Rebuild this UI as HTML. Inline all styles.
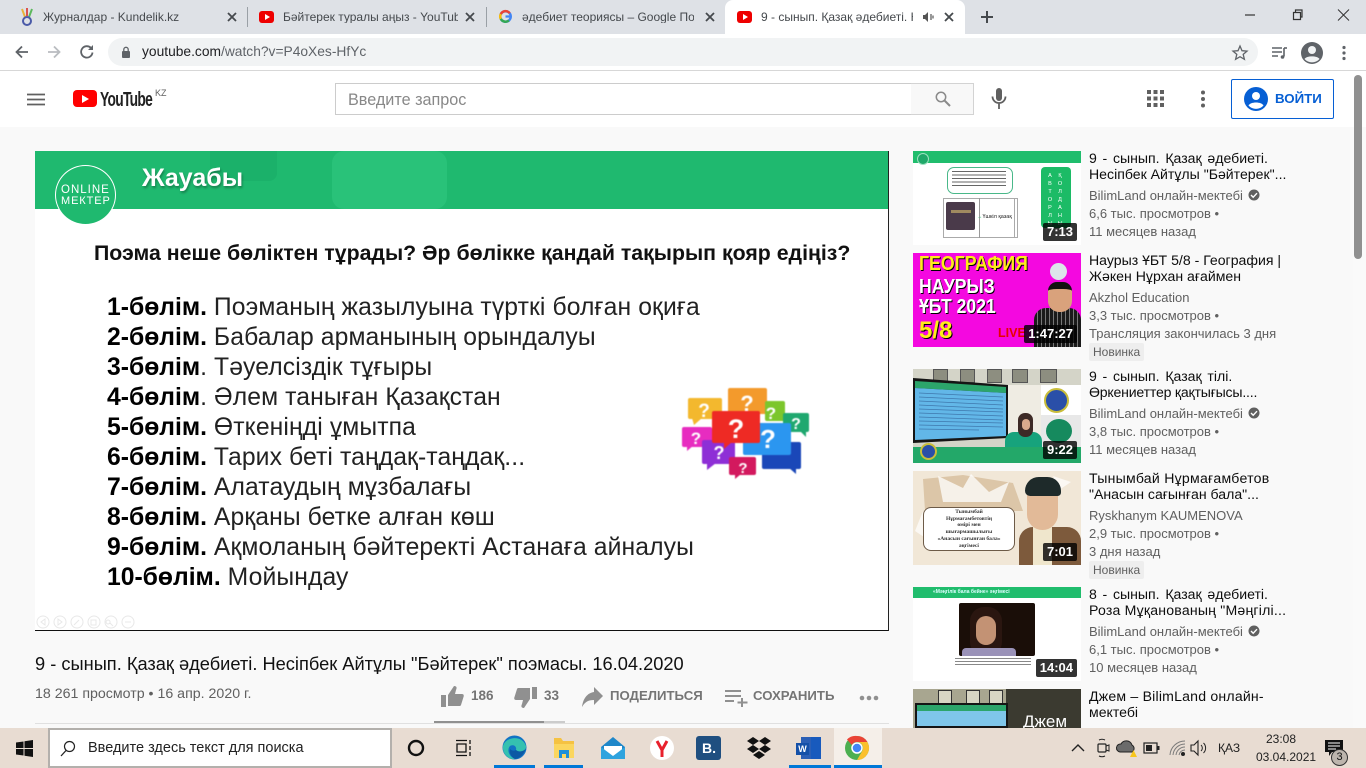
<!DOCTYPE html>
<html><head><meta charset="utf-8"><style>
html,body{margin:0;padding:0;width:1366px;height:768px;overflow:hidden;background:#f9f9f9;font-family:"Liberation Sans","Noto Sans CJK SC",sans-serif}
.a,.t{position:absolute}
.t{white-space:nowrap;line-height:1}
svg{position:absolute;overflow:visible}
.ti{font-size:14.100px;color:#0d0d0d}
.m{font-size:13px;color:#606060}
.d{background:rgba(0,0,0,.8);color:#fff;font-weight:bold;font-size:13px;line-height:18px;height:18px;padding:0 4px;border-radius:2px;position:absolute;white-space:nowrap;right:289px}
.nv{background:#eee;color:#606060;font-size:12px;position:absolute;height:18px;line-height:18px;padding:0 4px;border-radius:2px;left:1089px}
.b{font-size:24.700px;color:#222;letter-spacing:.11px}
.b b{color:#000;letter-spacing:0}
.tab{font-size:12px;color:#45494d}
</style></head><body>

<!-- tab strip -->
<div class="a" style="left:0;top:0;width:1366px;height:34px;background:#dee1e6"></div>
<svg style="left:17px;top:7px" width="20" height="20" viewBox="0 0 20 20"><path d="M5 2l3 8" stroke="#e8b33a" stroke-width="2" fill="none"/><path d="M10 1v8" stroke="#d9534f" stroke-width="2"/><path d="M15 2l-3 8" stroke="#5cb85c" stroke-width="2"/><circle cx="10" cy="14" r="4" fill="none" stroke="#4a5aa8" stroke-width="2"/></svg>
<div class="t tab" style="left:43px;top:11px;">Журналдар - Kundelik.kz</div>
<svg style="left:227px;top:12px" width="10" height="10" viewBox="0 0 10 10"><path d="M1 1l8 8M9 1L1 9" stroke="#45494d" stroke-width="1.800"/></svg>
<div class="a" style="left:247px;top:7px;width:1px;height:20px;background:#9aa0a6"></div>
<div class="a" style="left:486px;top:7px;width:1px;height:20px;background:#9aa0a6"></div>
<div class="a" style="left:259px;top:11px;width:15px;height:12px;background:#e00;border-radius:3px"></div>
<div class="a" style="left:265px;top:14px;border-left:5px solid #fff;border-top:3px solid transparent;border-bottom:3px solid transparent"></div>
<div class="t tab" style="left:283px;top:11px;width:175px;overflow:hidden">Бәйтерек туралы аңыз - YouTube</div>
<svg style="left:465px;top:12px" width="10" height="10" viewBox="0 0 10 10"><path d="M1 1l8 8M9 1L1 9" stroke="#45494d" stroke-width="1.800"/></svg>
<svg style="left:498px;top:9px" width="15" height="15" viewBox="0 0 16 16"><circle cx="8" cy="8" r="5.600" fill="none" stroke="#4285f4" stroke-width="2.600"/><path d="M12.500 4.500A5.600 5.600 0 0 0 3 5.400" stroke="#ea4335" stroke-width="2.600" fill="none"/><path d="M3 5.400a5.600 5.600 0 0 0 0 5.200" stroke="#fbbc05" stroke-width="2.600" fill="none"/><path d="M3 10.600a5.600 5.600 0 0 0 8.600 1.600" stroke="#34a853" stroke-width="2.600" fill="none"/><path d="M8 8h5.600" stroke="#4285f4" stroke-width="2.400"/></svg>
<div class="t tab" style="left:522px;top:11px;width:172px;overflow:hidden">әдебиет теориясы – Google Поиск</div>
<svg style="left:705px;top:12px" width="10" height="10" viewBox="0 0 10 10"><path d="M1 1l8 8M9 1L1 9" stroke="#45494d" stroke-width="1.800"/></svg>
<div class="a" style="left:725px;top:0;width:240px;height:34px;background:#fff;border-radius:8px 8px 0 0"></div>
<div class="a" style="left:737px;top:11px;width:15px;height:12px;background:#e00;border-radius:3px"></div>
<div class="a" style="left:743px;top:14px;border-left:5px solid #fff;border-top:3px solid transparent;border-bottom:3px solid transparent"></div>
<div class="t tab" style="left:761px;top:11px;width:152px;overflow:hidden">9 - сынып. Қазақ әдебиеті. Несіпбек</div>
<svg style="left:922px;top:11px" width="14" height="12" viewBox="0 0 14 12"><path d="M1 4h2l3-3v10L3 8H1z" fill="#555"/><path d="M9 3v6M11 4.500v3" stroke="#555" stroke-width="1.200"/></svg>
<svg style="left:944px;top:12px" width="10" height="10" viewBox="0 0 10 10"><path d="M1 1l8 8M9 1L1 9" stroke="#45494d" stroke-width="1.800"/></svg>
<svg style="left:980px;top:10px" width="14" height="14" viewBox="0 0 14 14"><path d="M7 1v12M1 7h12" stroke="#45494d" stroke-width="2"/></svg>
<svg style="left:1240px;top:6px" width="115" height="18" viewBox="0 0 115 18"><path d="M5 9h10" stroke="#333" stroke-width="1.200"/><path d="M53.500 6.500h7v7h-7zM55.500 6.500v-2.500h6.500v7h-1.500" fill="none" stroke="#333" stroke-width="1.200"/><path d="M98 3.500l11 11M109 3.500l-11 11" stroke="#333" stroke-width="1"/></svg>

<!-- toolbar -->
<div class="a" style="left:0;top:34px;width:1366px;height:36px;background:#fff"></div>
<div class="a" style="left:0;top:70px;width:1366px;height:1px;background:#d7d7d7"></div>
<svg style="left:14px;top:44px" width="16" height="16" viewBox="0 0 16 16"><path d="M14 8H3M8 2.500L2.500 8 8 13.500" fill="none" stroke="#5f6368" stroke-width="1.800"/></svg>
<svg style="left:46px;top:44px" width="16" height="16" viewBox="0 0 16 16"><path d="M2 8h11M8 2.500L13.500 8 8 13.500" fill="none" stroke="#b9bcc0" stroke-width="1.800"/></svg>
<svg style="left:78px;top:43px" width="18" height="18" viewBox="0 0 18 18"><path d="M14.500 9.500A5.700 5.700 0 1 1 13 5" fill="none" stroke="#5f6368" stroke-width="1.800"/><path d="M15 2v5h-5z" fill="#5f6368"/></svg>
<div class="a" style="left:108px;top:38px;width:1150px;height:28px;background:#f1f3f4;border-radius:14px"></div>
<svg style="left:121px;top:46px" width="10" height="13" viewBox="0 0 10 13"><rect x="1" y="5" width="8" height="7" rx="1" fill="#5f6368"/><path d="M2.800 5V3.500a2.200 2.200 0 0 1 4.400 0V5" fill="none" stroke="#5f6368" stroke-width="1.300"/></svg>
<div class="t" style="left:142px;top:45px;font-size:13.800px;color:#202124;">youtube.com<span style="color:#5f6368">/watch?v=P4oXes-HfYc</span></div>
<svg style="left:1232px;top:45px" width="16" height="15" viewBox="0 0 16 15"><path d="M8 1l2 4.700 5 .4-3.800 3.300 1.200 4.900L8 11.700l-4.400 2.600 1.200-4.900L1 6.100l5-.4z" fill="none" stroke="#5f6368" stroke-width="1.300"/></svg>
<svg style="left:1271px;top:46px" width="17" height="14" viewBox="0 0 17 14"><path d="M1 2h10M1 6h10M1 10h6" stroke="#5f6368" stroke-width="1.400"/><path d="M13 2v8.500" stroke="#5f6368" stroke-width="1.600"/><circle cx="11.500" cy="11" r="1.800" fill="#5f6368"/><path d="M13 2h3" stroke="#5f6368" stroke-width="1.600"/></svg>
<svg style="left:1300px;top:41px" width="24" height="24" viewBox="0 0 24 24"><circle cx="12" cy="12" r="11" fill="#5f6368"/><circle cx="12" cy="9" r="4" fill="#f1f3f4"/><path d="M4.500 18c2-3.500 13-3.500 15 0a10 10 0 0 1-15 0z" fill="#f1f3f4"/></svg>
<svg style="left:1341px;top:45px" width="6" height="16" viewBox="0 0 6 16"><circle cx="3" cy="2.500" r="1.600" fill="#5f6368"/><circle cx="3" cy="8" r="1.600" fill="#5f6368"/><circle cx="3" cy="13.500" r="1.600" fill="#5f6368"/></svg>

<!-- scrollbar track -->
<div class="a" style="left:1353px;top:127px;width:13px;height:601px;background:#fafafa"></div>

<!-- yt header -->
<div class="a" style="left:0;top:71px;width:1366px;height:56px;background:#fff"></div>
<div class="a" style="left:1354px;top:75px;width:8px;height:184px;background:#909090;border-radius:4px"></div>
<svg style="left:27px;top:93px" width="18" height="13" viewBox="0 0 18 13"><path d="M0 1.500h18M0 6.500h18M0 11.500h18" stroke="#606060" stroke-width="1.700"/></svg>
<div class="a" style="left:73px;top:90px;width:24px;height:17px;background:#f00;border-radius:4px"></div>
<div class="a" style="left:82px;top:94.500px;border-left:7px solid #fff;border-top:4px solid transparent;border-bottom:4px solid transparent"></div>
<div class="t" style="left:100px;top:90px;font-size:20px;color:#212121;font-weight:bold;letter-spacing:-1px;transform:scaleX(.69);transform-origin:0 0">YouTube</div>
<div class="t" style="left:155px;top:89px;font-size:9px;color:#606060">KZ</div>
<div class="a" style="left:335px;top:83px;width:575px;height:30px;background:#fff;border:1px solid #ccc"></div>
<div class="t" style="left:348px;top:92px;font-size:16.200px;color:#888;">Введите запрос</div>
<div class="a" style="left:911px;top:83px;width:62px;height:30px;background:#f8f8f8;border:1px solid #d3d3d3;border-left:0"></div>
<svg style="left:935px;top:91px" width="16" height="16" viewBox="0 0 16 16"><circle cx="6" cy="6" r="4.700" fill="none" stroke="#8a8a8a" stroke-width="1.500"/><path d="M9.500 9.500L15 15" stroke="#8a8a8a" stroke-width="2"/></svg>
<svg style="left:990px;top:88px" width="18" height="21" viewBox="0 0 18 21"><rect x="6" y="0" width="6" height="13" rx="3" fill="#606060"/><path d="M2.500 8.500a6.500 6.500 0 0 0 13 0M9 15v6" fill="none" stroke="#606060" stroke-width="1.800"/></svg>
<svg style="left:1147px;top:90px" width="17" height="17" viewBox="0 0 17 17" fill="#606060"><rect width="4" height="4"/><rect x="6.500" width="4" height="4"/><rect x="13" width="4" height="4"/><rect y="6.500" width="4" height="4"/><rect x="6.500" y="6.500" width="4" height="4"/><rect x="13" y="6.500" width="4" height="4"/><rect y="13" width="4" height="4"/><rect x="6.500" y="13" width="4" height="4"/><rect x="13" y="13" width="4" height="4"/></svg>
<svg style="left:1200px;top:90px" width="6" height="18" viewBox="0 0 6 18"><circle cx="3" cy="2.500" r="2" fill="#606060"/><circle cx="3" cy="9" r="2" fill="#606060"/><circle cx="3" cy="15.500" r="2" fill="#606060"/></svg>
<div class="a" style="left:1231px;top:79px;width:101px;height:38px;border:1px solid #065fd4;border-radius:2px;background:#fff"></div>
<svg style="left:1244px;top:87px" width="24" height="24" viewBox="0 0 24 24"><circle cx="12" cy="12" r="12" fill="#065fd4"/><circle cx="12" cy="9" r="4" fill="#fff"/><path d="M4.500 18.500c2-4 13-4 15 0a10 10 0 0 1-15 0z" fill="#fff"/></svg>
<div class="t" style="left:1275px;top:92px;font-size:13.300px;color:#065fd4;font-weight:bold;">ВОЙТИ</div>

<!-- video -->
<div class="a" style="left:35px;top:151px;width:854px;height:480px;background:#fff"></div>
<div class="a" style="left:35px;top:630px;width:854px;height:1px;background:#111"></div>
<div class="a" style="left:888px;top:151px;width:1px;height:480px;background:#222"></div>
<div class="a" style="left:35px;top:151px;width:853px;height:58px;background:#1fb96f"></div>
<div class="a" style="left:332px;top:151px;width:115px;height:58px;background:#2cc47c;border-radius:12px;opacity:.8"></div>
<div class="a" style="left:210px;top:151px;width:67px;height:30px;background:#17a964;opacity:.45;border-radius:0 0 8px 8px"></div>
<div class="a" style="left:55px;top:165px;width:61px;height:60px;box-sizing:border-box;background:#1fb96f;border:1px solid #fff;border-radius:50%;"></div>
<div class="t" style="left:61px;top:185px;font-size:11.500px;color:#fff;letter-spacing:1px">ONLINE</div>
<div class="t" style="left:61px;top:196px;font-size:11px;color:#fff;letter-spacing:.9px">МЕКТЕР</div>
<div class="t" style="left:142px;top:166px;font-size:25px;font-weight:bold;color:#fff;text-shadow:1px 2px 2px rgba(0,0,0,.3)">Жауабы</div>
<div class="t" style="left:94px;top:243px;font-size:21.300px;font-weight:bold;color:#111;">Поэма неше бөліктен тұрады? Әр бөлікке қандай тақырып қояр едіңіз?</div>
<div class="t b" style="left:107px;top:296px"><b>1-бөлім.</b> Поэманың жазылуына түрткі болған оқиға</div>
<div class="t b" style="left:107px;top:326px"><b>2-бөлім.</b> Бабалар арманының орындалуы</div>
<div class="t b" style="left:107px;top:356px"><b>3-бөлім</b>. Тәуелсіздік тұғыры</div>
<div class="t b" style="left:107px;top:386px"><b>4-бөлім</b>. Әлем таныған Қазақстан</div>
<div class="t b" style="left:107px;top:416px"><b>5-бөлім.</b> Өткеніңді ұмытпа</div>
<div class="t b" style="left:107px;top:446px"><b>6-бөлім.</b> Тарих беті таңдақ-таңдақ...</div>
<div class="t b" style="left:107px;top:476px"><b>7-бөлім.</b> Алатаудың мұзбалағы</div>
<div class="t b" style="left:107px;top:506px"><b>8-бөлім.</b> Арқаны бетке алған көш</div>
<div class="t b" style="left:107px;top:536px"><b>9-бөлім.</b> Ақмоланың бәйтеректі Астанаға айналуы</div>
<div class="t b" style="left:107px;top:566px"><b>10-бөлім.</b> Мойындау</div>

<!-- question bubbles -->
<svg style="left:660px;top:375px;filter:blur(.5px)" width="170" height="120" viewBox="0 0 170 120" font-family="Liberation Sans" font-weight="bold" fill="#fff" text-anchor="middle">
<rect x="28" y="23" width="34" height="21" rx="2" fill="#f3b82e"/><path d="M32 43l2 7 8-7z" fill="#f3b82e"/><text x="44" y="42" font-size="19">?</text>
<rect x="68" y="13" width="39" height="26" rx="2" fill="#f39a2c"/><text x="87" y="36" font-size="22">?</text>
<rect x="105" y="26" width="20" height="20" rx="2" fill="#7cc62c"/><text x="111" y="44" font-size="17">?</text>
<rect x="123" y="38" width="26" height="19" rx="2" fill="#1fa86f"/><path d="M140 56l6 6v-6z" fill="#1fa86f"/><text x="136" y="54" font-size="16">?</text>
<rect x="22" y="52" width="30" height="20" rx="2" fill="#e72cc0"/><path d="M27 70v6l7-6z" fill="#e72cc0"/><text x="36" y="69" font-size="17">?</text>
<rect x="42" y="65" width="33" height="24" rx="2" fill="#8e2fd6"/><path d="M47 88v7l9-7z" fill="#8e2fd6"/><text x="59" y="84" font-size="18">?</text>
<rect x="69" y="82" width="27" height="18" rx="2" fill="#d3195e"/><path d="M75 99v5l6-5z" fill="#d3195e"/><text x="83" y="98" font-size="15">?</text>
<rect x="102" y="67" width="39" height="27" rx="2" fill="#1a47b8"/><path d="M128 92l8 7v-7z" fill="#1a47b8"/>
<rect x="83" y="48" width="48" height="32" rx="2" fill="#2b96f0"/><text x="108" y="73" font-size="26">?</text>
<rect x="52" y="36" width="48" height="32" rx="2" fill="#ee2a24"/><path d="M64 66v8l9-8z" fill="#ee2a24"/><text x="76" y="63" font-size="27">?</text>
</svg>

<!-- player controls ghost -->
<svg style="left:36px;top:614px" width="100" height="16" viewBox="0 0 100 16" fill="none" stroke="#e8e8e8" stroke-width="1"><circle cx="7" cy="8" r="6"/><circle cx="24" cy="8" r="6"/><circle cx="41" cy="8" r="6"/><circle cx="58" cy="8" r="6"/><circle cx="75" cy="8" r="6"/><circle cx="92" cy="8" r="6"/><path d="M9 5L5 8l4 3zM22 5l4 3-4 3zM38 11l5-5M55 6h5v5h-5zM72 6a2 2 0 1 0 .1 0zM74 9l3 3M89 8h6"/></svg>

<!-- title -->
<div class="t" style="left:35px;top:655px;font-size:18.250px;color:#111;">9 - сынып. Қазақ әдебиеті. Несіпбек Айтұлы "Бәйтерек" поэмасы. 16.04.2020</div>
<div class="t" style="left:35px;top:687px;font-size:14.200px;color:#606060;">18 261 просмотр • 16 апр. 2020 г.</div>
<svg style="left:440px;top:685px" width="24" height="23" viewBox="0 0 24 23"><path d="M1 10h5v12H1zM8 21V10l6-9c3 0 3 2 2 4l-1 4h7c2 0 2 2 1.500 3l-2.500 8c-.5 1-1 1-2 1z" fill="#909090"/></svg>
<div class="t" style="left:471px;top:689px;font-size:13.500px;font-weight:bold;color:#757575;">186</div>
<svg style="left:514px;top:686px" width="24" height="23" viewBox="0 0 24 23"><path d="M18 1h5v12h-5zM16 2v11l-6 9c-3 0-3-2-2-4l1-4H2c-2 0-2-2-1.500-3L3 3c.5-1 1-1 2-1z" fill="#909090"/></svg>
<div class="t" style="left:544px;top:689px;font-size:13.500px;font-weight:bold;color:#757575;">33</div>
<svg style="left:582px;top:687px" width="21" height="20" viewBox="0 0 21 20"><path d="M12 0l9 9-9 9v-5C6 13 3 15 0 20 1 12 5 6 12 5z" fill="#909090"/></svg>
<div class="t" style="left:610px;top:689px;font-size:13.200px;font-weight:bold;color:#757575;">ПОДЕЛИТЬСЯ</div>
<svg style="left:725px;top:689px" width="23" height="18" viewBox="0 0 23 18"><path d="M0 2h16M0 7h16M0 12h9M17 9v9M12.500 13.500h10" stroke="#909090" stroke-width="2"/></svg>
<div class="t" style="left:753px;top:689px;font-size:13.200px;font-weight:bold;color:#757575;">СОХРАНИТЬ</div>
<svg style="left:859px;top:695px" width="20" height="6" viewBox="0 0 20 6"><circle cx="3" cy="3" r="2.300" fill="#909090"/><circle cx="10" cy="3" r="2.300" fill="#909090"/><circle cx="17" cy="3" r="2.300" fill="#909090"/></svg>
<div class="a" style="left:35px;top:723px;width:854px;height:1px;background:#e0e0e0"></div>
<div class="a" style="left:434px;top:721px;width:131px;height:2px;background:#ccc"></div>
<div class="a" style="left:434px;top:721px;width:110px;height:2px;background:#909090"></div>

<!-- sidebar thumbs -->
<div class="a" style="left:913px;top:151px;width:168px;height:94px;background:#fff;overflow:hidden">
 <div class="a" style="left:0;top:0;width:168px;height:12px;background:#20bd6d"></div>
 <div class="a" style="left:4px;top:2px;width:12px;height:12px;border-radius:50%;background:#1fa869;border:1px solid #9fe0c0;box-sizing:border-box"></div>
 <div class="a" style="left:34px;top:16px;width:66px;height:27px;box-sizing:border-box;background:#fff;border:1px solid #49b889;border-radius:7px"></div>
 <div class="a" style="left:39px;top:20px;width:54px;height:15px;background:repeating-linear-gradient(#666 0 1px,#fff 1px 3.500px)"></div>
 <div class="a" style="left:30px;top:47px;width:75px;height:40px;box-sizing:border-box;border:1px solid #aaa;background:#fff"></div>
 <div class="a" style="left:66px;top:47px;width:1px;height:40px;background:#999"></div>
 <div class="a" style="left:101px;top:47px;width:1px;height:40px;background:#aaa"></div>
 <div class="a" style="left:33px;top:51px;width:29px;height:28px;background:#4a3a4a;border-radius:2px"></div>
 <div class="a" style="left:38px;top:59px;width:20px;height:3px;background:#a08a60"></div>
 <div class="t" style="left:64px;top:64px;font-size:5.500px;color:#222"><span style="color:#1cbb66">→</span>Үшкіл қазақ</div>
 <div class="a" style="left:128px;top:16px;width:30px;height:61px;background:#1cbb66;border-radius:4px"></div>
 <div class="a" style="left:134px;top:21px;width:6px;font-size:5.500px;line-height:8px;color:#fff;text-align:center">А В Т О Р Л Ы</div>
 <div class="a" style="left:144px;top:21px;width:6px;font-size:5.500px;line-height:8px;color:#fff;text-align:center">Қ О Л Д А Н Ы</div>
</div>
<div class="d" style="top:223px">7:13</div>

<div class="a" style="left:913px;top:253px;width:168px;height:94px;background:#f408e0;overflow:hidden">
 <div class="t" style="left:6px;top:1px;font-size:20px;font-weight:bold;color:#ffeb1a;text-shadow:1px 1px 0 #000;transform:scaleX(.886);transform-origin:0 0">ГЕОГРАФИЯ</div>
 <div class="t" style="left:6px;top:24px;font-size:20px;font-weight:bold;color:#fff;text-shadow:1px 1px 0 #000;transform:scaleX(.88);transform-origin:0 0">НАУРЫЗ</div>
 <div class="t" style="left:6px;top:44px;font-size:20px;font-weight:bold;color:#fff;text-shadow:1px 1px 0 #000;transform:scaleX(.88);transform-origin:0 0">ҰБТ 2021</div>
 <div class="t" style="left:6px;top:66px;font-size:24px;font-weight:bold;color:#ffeb1a;text-shadow:1px 1px 0 #000">5/8</div>
 <div class="t" style="left:85px;top:74px;font-size:12.500px;font-weight:bold;color:#e80000">LIVE</div>
 <div class="a" style="left:137px;top:10px;width:17px;height:17px;border-radius:50%;background:#dde4ea"></div>
 <div class="a" style="left:121px;top:55px;width:47px;height:39px;background:repeating-linear-gradient(90deg,#1a1a1a 0 3px,#777 3px 4px);border-radius:12px 12px 0 0"></div>
 <div class="a" style="left:135px;top:29px;width:24px;height:30px;background:#d9a27c;border-radius:9px 9px 11px 11px;border-top:7px solid #111;box-sizing:border-box"></div>
</div>
<div class="d" style="top:325px">1:47:27</div>

<div class="a" style="left:913px;top:369px;width:168px;height:94px;background:#d4d4c8;overflow:hidden">
 <div class="a" style="left:20px;top:0;width:15px;height:14px;background:#8d8e80;border:1px solid #555;box-sizing:border-box"></div>
 <div class="a" style="left:47px;top:0;width:15px;height:14px;background:#8d8e80;border:1px solid #555;box-sizing:border-box"></div>
 <div class="a" style="left:74px;top:0;width:15px;height:14px;background:#8d8e80;border:1px solid #555;box-sizing:border-box"></div>
 <div class="a" style="left:99px;top:0;width:16px;height:14px;background:#8d8e80;border:1px solid #555;box-sizing:border-box"></div>
 <div class="a" style="left:127px;top:0;width:17px;height:14px;background:#8d8e80;border:1px solid #555;box-sizing:border-box"></div>
 <div class="a" style="left:95px;top:16px;width:36px;height:62px;background:#efece3"></div>
 <svg style="left:0;top:0" width="168" height="94" viewBox="0 0 168 94"><path d="M0 9l95 7v53L0 74z" fill="#151515"/><path d="M2 12l91 6v6L2 19z" fill="#2ca56b"/><path d="M2 19l91 5v43L2 71z" fill="#62b7e8"/><path d="M6 24l84 4M6 28l84 4M6 32l84 4M6 36l84 4M6 40l84 3M6 44l84 3M6 48l84 3M6 52l84 2M6 56l84 2M6 60l60 1" stroke="#3f78ad" stroke-width=".8"/></svg>
 <div class="a" style="left:128px;top:16px;width:40px;height:30px;background:#fff"></div>
 <div class="a" style="left:131px;top:19px;width:25px;height:25px;background:#2a4fa8;border:2px solid #c9bd3a;border-radius:50%;box-sizing:border-box"></div>
 <div class="a" style="left:128px;top:46px;width:40px;height:32px;background:#e8e8e8"></div>
 <div class="a" style="left:133px;top:50px;width:26px;height:24px;background:#168a5e;border-radius:50%"></div>
 <div class="a" style="left:92px;top:63px;width:37px;height:16px;background:#17a37c;border-radius:9px 9px 0 0"></div>
 <div class="a" style="left:105px;top:44px;width:15px;height:24px;background:#3d2a26;border-radius:7px"></div>
 <div class="a" style="left:109px;top:50px;width:8px;height:11px;background:#d9a98c;border-radius:4px"></div>
 <div class="a" style="left:0;top:78px;width:168px;height:16px;background:#23a869"></div>
 <div class="a" style="left:7px;top:74px;width:17px;height:17px;background:#2a4fa8;border:2px solid #c9bd3a;border-radius:50%;box-sizing:border-box"></div>
</div>
<div class="d" style="top:441px">9:22</div>

<div class="a" style="left:913px;top:471px;width:168px;height:94px;background:#f1e7d7;overflow:hidden">
 <svg style="left:0;top:0" width="168" height="94" viewBox="0 0 168 94"><path d="M10 8l40-4 50 8 10 28H12z" fill="#dcc6a8"/><path d="M25 5l25 12 8-14 18 18 20-10-8 20H30z" fill="#fff" opacity=".75"/><path d="M2 60l8-20 4 28zM140 5l18 6-12 8z" fill="#fff" opacity=".7"/></svg>
 <div class="a" style="left:10px;top:36px;width:92px;height:44px;background:#fff;border:1px solid #6d5b48;border-radius:8px;box-sizing:border-box"></div>
 <div class="a" style="left:10px;top:38px;width:92px;font:bold 5.500px/6.700px 'Liberation Serif',serif;text-align:center;color:#333">Тынымбай<br>Нұрмағамбетовтің<br>өмірі мен<br>шығармашылығы<br>«Анасын сағынған бала»<br>әңгімесі</div>
 <div class="a" style="left:106px;top:56px;width:62px;height:38px;background:#7d5a3c;border-radius:14px 14px 0 0"></div>
 <div class="a" style="left:120px;top:56px;width:19px;height:38px;background:#efe6cc"></div>
 <div class="a" style="left:114px;top:10px;width:31px;height:49px;background:#e2ba98;border-radius:14px 14px 16px 16px"></div>
 <div class="a" style="left:112px;top:6px;width:36px;height:19px;background:#1e2a2a;border-radius:16px 16px 4px 6px"></div>
</div>
<div class="d" style="top:543px">7:01</div>

<div class="a" style="left:913px;top:587px;width:168px;height:94px;background:#fff;overflow:hidden">
 <div class="a" style="left:0;top:0;width:168px;height:11px;background:#20bd6d"></div>
 <div class="t" style="left:20px;top:3px;font-size:5px;font-weight:bold;color:#dff">«Мәңгілік бала бейне» әңгімесі</div>
 <div class="a" style="left:46px;top:16px;width:76px;height:53px;background:#1a0e08;border-radius:2px"></div>
 <div class="a" style="left:57px;top:20px;width:32px;height:49px;background:#2a1610;border-radius:14px"></div>
 <div class="a" style="left:63px;top:29px;width:20px;height:29px;background:#c39274;border-radius:10px"></div>
 <div class="a" style="left:49px;top:61px;width:54px;height:8px;background:#9a92b8;border-radius:4px 4px 0 0"></div>
 <div class="a" style="left:42px;top:71px;width:76px;height:9px;background:repeating-linear-gradient(#888 0 1px,#fff 1px 3px)"></div>
</div>
<div class="d" style="top:659px">14:04</div>

<div class="a" style="left:913px;top:689px;width:168px;height:39px;background:#3b3a30;overflow:hidden">
 <div class="a" style="left:0;top:0;width:93px;height:39px;background:#a8a690"></div>
 <div class="a" style="left:25px;top:1px;width:14px;height:20px;background:#d8d6c4;border:1px solid #333;box-sizing:border-box"></div>
 <div class="a" style="left:53px;top:1px;width:14px;height:20px;background:#d8d6c4;border:1px solid #333;box-sizing:border-box"></div>
 <div class="a" style="left:76px;top:1px;width:14px;height:20px;background:#d8d6c4;border:1px solid #333;box-sizing:border-box"></div>
 <div class="a" style="left:2px;top:14px;width:93px;height:25px;background:#7fc6ea;border:2px solid #151515;box-sizing:border-box"></div>
 <div class="a" style="left:4px;top:16px;width:89px;height:6px;background:#2ca56b"></div>
 <div class="t" style="left:110px;top:24px;font-size:17px;color:#fff">Джем</div>
</div>

<!-- sidebar text -->
<div class="t ti" style="left:1089px;top:151px;word-spacing:1.800px">9 - сынып. Қазақ әдебиеті.</div>
<div class="t ti" style="left:1089px;top:167px">Несіпбек Айтұлы "Бәйтерек"...</div>
<div class="t m" style="left:1089px;top:189px">BilimLand онлайн-мектебі</div>
<svg style="left:1248px;top:189px" width="12" height="12" viewBox="0 0 12 12"><circle cx="6" cy="6" r="5.500" fill="#606060"/><path d="M3 6l2.200 2.200L9 4.200" stroke="#fff" stroke-width="1.400" fill="none"/></svg>
<div class="t m" style="left:1089px;top:207px">6,6 тыс. просмотров •</div>
<div class="t m" style="left:1089px;top:225px">11 месяцев назад</div>

<div class="t ti" style="left:1089px;top:253px">Наурыз ҰБТ 5/8 - География |</div>
<div class="t ti" style="left:1089px;top:269px">Жәкен Нұрхан ағаймен</div>
<div class="t m" style="left:1089px;top:291px">Akzhol Education</div>
<div class="t m" style="left:1089px;top:309px">3,3 тыс. просмотров •</div>
<div class="t m" style="left:1089px;top:327px">Трансляция закончилась 3 дня</div>
<div class="nv" style="top:343px">Новинка</div>

<div class="t ti" style="left:1089px;top:369px;word-spacing:1.800px">9 - сынып. Қазақ тілі.</div>
<div class="t ti" style="left:1089px;top:385px;letter-spacing:-.2px">Өркениеттер қақтығысы....</div>
<div class="t m" style="left:1089px;top:407px">BilimLand онлайн-мектебі</div>
<svg style="left:1248px;top:407px" width="12" height="12" viewBox="0 0 12 12"><circle cx="6" cy="6" r="5.500" fill="#606060"/><path d="M3 6l2.200 2.200L9 4.200" stroke="#fff" stroke-width="1.400" fill="none"/></svg>
<div class="t m" style="left:1089px;top:425px">3,8 тыс. просмотров •</div>
<div class="t m" style="left:1089px;top:443px">11 месяцев назад</div>

<div class="t ti" style="left:1089px;top:471px;letter-spacing:.25px">Тынымбай Нұрмағамбетов</div>
<div class="t ti" style="left:1089px;top:487px">"Анасын сағынған бала"...</div>
<div class="t m" style="left:1089px;top:509px">Ryskhanym KAUMENOVA</div>
<div class="t m" style="left:1089px;top:527px">2,9 тыс. просмотров •</div>
<div class="t m" style="left:1089px;top:545px">3 дня назад</div>
<div class="nv" style="top:561px">Новинка</div>

<div class="t ti" style="left:1089px;top:587px;word-spacing:1.800px">8 - сынып. Қазақ әдебиеті.</div>
<div class="t ti" style="left:1089px;top:603px;letter-spacing:.2px">Роза Мұқанованың "Мәңгілі...</div>
<div class="t m" style="left:1089px;top:625px">BilimLand онлайн-мектебі</div>
<svg style="left:1248px;top:625px" width="12" height="12" viewBox="0 0 12 12"><circle cx="6" cy="6" r="5.500" fill="#606060"/><path d="M3 6l2.200 2.200L9 4.200" stroke="#fff" stroke-width="1.400" fill="none"/></svg>
<div class="t m" style="left:1089px;top:643px">6,1 тыс. просмотров •</div>
<div class="t m" style="left:1089px;top:661px">10 месяцев назад</div>

<div class="t ti" style="left:1089px;top:689px;letter-spacing:.2px">Джем – BilimLand онлайн-</div>
<div class="t ti" style="left:1089px;top:705px">мектебі</div>

<!-- taskbar -->
<div class="a" style="left:0;top:728px;width:1366px;height:40px;background:#e8dcd2"></div>
<svg style="left:16px;top:740px" width="17" height="17" viewBox="0 0 17 17" fill="#111"><path d="M0 2.500l7.500-1V8H0zM8.500 1.300L17 0v8H8.500zM0 9h7.500v6.500L0 14.500zM8.500 9H17v8l-8.500-1.200z"/></svg>
<div class="a" style="left:48px;top:728px;width:344px;height:40px;box-sizing:border-box;background:#fff;border:2px solid #b3b0ac"></div>
<svg style="left:60px;top:740px" width="16" height="17" viewBox="0 0 16 17"><circle cx="9.500" cy="6.500" r="5" fill="none" stroke="#222" stroke-width="1.200"/><path d="M6 10.500L1 16" stroke="#222" stroke-width="1.300"/></svg>
<div class="t" style="left:88px;top:741px;font-size:14.500px;color:#222;">Введите здесь текст для поиска</div>
<svg style="left:407px;top:739px" width="18" height="18" viewBox="0 0 18 18"><circle cx="9" cy="9" r="7" fill="none" stroke="#111" stroke-width="2.400"/></svg>
<svg style="left:455px;top:739px" width="18" height="18" viewBox="0 0 18 18"><path d="M1 1.500h11M1 16.500h11M2 5h9v8H2zM15 1v4M15 7v4M15 13v4" fill="none" stroke="#111" stroke-width="1.300"/></svg>
<svg style="left:502px;top:735px" width="25" height="25" viewBox="0 0 25 25"><circle cx="12.500" cy="12.500" r="12" fill="#1273c4"/><path d="M1 11C3 2 20-1 24 11c1 5-7 7-10 4 1-4-3-6-6-4-3 3-2 10 5 13C6 25 0 18 1 11z" fill="#35c1b0"/><path d="M14 15c3 3 10 1 10-3-1 6-5 11-11 12-4-2-6-6-5-10 2 2 4 2 6 1z" fill="#0c59a4"/></svg>
<svg style="left:553px;top:736px" width="22" height="24" viewBox="0 0 22 24"><path d="M1 2h7l2 3h11v6H1z" fill="#f5c242"/><path d="M1 8h20v14H1z" fill="#fbd65e"/><path d="M6 14h10v8h-3v-4H9v4H6z" fill="#1e8fd8"/></svg>
<svg style="left:601px;top:736px" width="24" height="24" viewBox="0 0 24 24"><path d="M12 1l12 10v12H0V11z" fill="#1f87c9"/><path d="M3 10h18v7l-9 5-9-5z" fill="#fff"/><path d="M0 11l12 9 12-9v12H0z" fill="#2ea3de"/></svg>
<svg style="left:650px;top:736px" width="24" height="24" viewBox="0 0 24 24"><circle cx="12" cy="12" r="12" fill="#fff"/><path d="M7 5l5 9 5-9M12 14v7" fill="none" stroke="#e8202c" stroke-width="3"/></svg>
<div class="a" style="left:696px;top:736px;width:25px;height:24px;background:#1f4f80;border-radius:3px"></div>
<div class="t" style="left:702px;top:741px;font-size:14px;font-weight:bold;color:#fff">B.</div>
<svg style="left:746px;top:736px" width="26" height="24" viewBox="0 0 26 24" fill="#111"><path d="M7 1l6 4-6 4-6-4zM19 1l6 4-6 4-6-4zM7 9l6 4-6 4-6-4zM19 9l6 4-6 4-6-4zM13 15l6 4-6 4-6-4z"/></svg>
<div class="a" style="left:801px;top:737px;width:20px;height:22px;background:#2b5fb5"></div>
<div class="a" style="left:811px;top:737px;width:10px;height:22px;background:#185abd"></div>
<div class="a" style="left:796px;top:743px;width:13px;height:12px;background:#1450a8;color:#fff;font:bold 9px/12px 'Liberation Sans',sans-serif;text-align:center">W</div>
<div class="a" style="left:789px;top:765px;width:42px;height:3px;background:#0078d7"></div>
<div class="a" style="left:834px;top:728px;width:48px;height:40px;background:#f5efe9"></div>
<div class="a" style="left:834px;top:765px;width:48px;height:3px;background:#0078d7"></div>
<div class="a" style="left:494px;top:765px;width:41px;height:3px;background:#0078d7"></div>
<div class="a" style="left:544px;top:765px;width:39px;height:3px;background:#0078d7"></div>
<svg style="left:845px;top:736px" width="24" height="24" viewBox="0 0 24 24"><circle cx="12" cy="12" r="12" fill="#4caf50"/><path d="M12 0a12 12 0 0 1 10.400 6H12a6 6 0 0 0-5.200 3L2 3.500A12 12 0 0 1 12 0z" fill="#ea4335"/><path d="M22.400 6A12 12 0 0 1 12 24l5.200-9A6 6 0 0 0 12 6z" fill="#fbc02d"/><circle cx="12" cy="12" r="5" fill="#4285f4" stroke="#fff" stroke-width="1.500"/></svg>

<svg style="left:1071px;top:743px" width="14" height="9" viewBox="0 0 14 9"><path d="M1 8l6-6 6 6" fill="none" stroke="#222" stroke-width="1.400"/></svg>
<svg style="left:1096px;top:738px" width="14" height="20" viewBox="0 0 14 20"><rect x="2" y="6" width="8" height="8" rx="1" fill="none" stroke="#222" stroke-width="1.200"/><path d="M10 8l3-1v6l-3-1M3 2c2-1 4-1 6 0M3 18c2 1 4 1 6 0" fill="none" stroke="#222" stroke-width="1"/></svg>
<svg style="left:1116px;top:739px" width="22" height="20" viewBox="0 0 22 20"><path d="M4 13a4 4 0 0 1 1-8 6 6 0 0 1 11 1 4 4 0 0 1 0 7z" fill="#6b6b6b" stroke="#222"/><path d="M14 18l3.500-7 3.500 7z" fill="#f7c61c"/></svg>
<svg style="left:1143px;top:742px" width="17" height="12" viewBox="0 0 17 12"><rect x="1" y="1" width="13" height="10" fill="none" stroke="#222" stroke-width="1.200"/><rect x="3" y="3" width="6" height="6" fill="#222"/><rect x="14.500" y="4" width="2" height="4" fill="#222"/></svg>
<svg style="left:1169px;top:739px" width="18" height="18" viewBox="0 0 18 18"><path d="M1 16A15 15 0 0 1 16 2M4 16A12 12 0 0 1 16 5M7 16a9 9 0 0 1 9-8M10 16a6 6 0 0 1 6-5" fill="none" stroke="#7a7a7a"/><circle cx="14" cy="15" r="2" fill="#222"/></svg>
<svg style="left:1190px;top:740px" width="17" height="16" viewBox="0 0 17 16"><path d="M1 5h3l4-4v14l-4-4H1z" fill="none" stroke="#222" stroke-width="1.100"/><path d="M11 5a4 4 0 0 1 0 6M13.500 3a7 7 0 0 1 0 10" fill="none" stroke="#222"/></svg>
<div class="t" style="left:1218px;top:742px;font-size:12px;color:#222">ҚАЗ</div>
<div class="t" style="left:1266px;top:733px;font-size:12px;color:#222">23:08</div>
<div class="t" style="left:1256px;top:751px;font-size:12px;color:#222;">03.04.2021</div>
<svg style="left:1325px;top:740px" width="18" height="16" viewBox="0 0 18 16"><path d="M0 0h18v12H7l-3 4v-4H0z" fill="#111"/><path d="M3 3h12M3 6h12M3 9h8" stroke="#fff"/></svg>
<div class="a" style="left:1331px;top:749px;width:17px;height:17px;box-sizing:border-box;border:1px solid #333;border-radius:50%;background:#bdb5ad;font-size:11px;line-height:15px;text-align:center;color:#111">3</div>

</body></html>
